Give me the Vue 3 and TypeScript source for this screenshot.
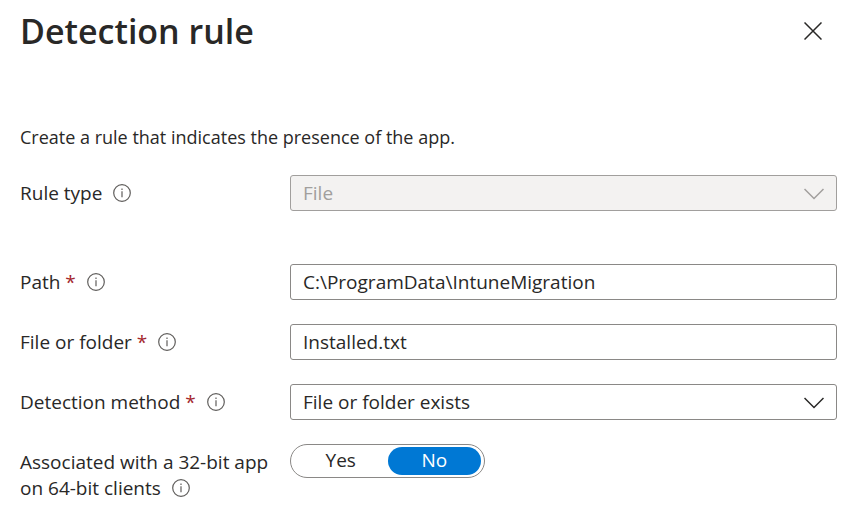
<script setup lang="ts">
import { ref } from 'vue'

interface Field {
  id: string
  label: string
  kind: 'text' | 'select'
  required: boolean
  disabled: boolean
  value: string
}

const fields = ref<Field[]>([
  { id: 'rule-type', label: 'Rule type', kind: 'select', required: false, disabled: true, value: 'File' },
  { id: 'path', label: 'Path', kind: 'text', required: true, disabled: false, value: 'C:\\ProgramData\\IntuneMigration' },
  { id: 'file-or-folder', label: 'File or folder', kind: 'text', required: true, disabled: false, value: 'Installed.txt' },
  { id: 'detection-method', label: 'Detection method', kind: 'select', required: true, disabled: false, value: 'File or folder exists' },
])

const choices = ['Yes', 'No']
const associated = ref('No')
</script>

<template>
  <main class="panel">
    <header class="header">
      <h1 class="title">Detection rule</h1>
      <button class="close" type="button">
        <svg width="18" height="18" viewBox="0 0 18 18" aria-hidden="true">
          <path d="M.5 .5 17.5 17.5M17.5 .5 .5 17.5" fill="none" stroke="currentColor" stroke-width="1.5" />
        </svg>
      </button>
    </header>

    <p class="intro">Create a rule that indicates the presence of the app.</p>

    <form class="form" @submit.prevent>
      <div v-for="field in fields" :key="field.id" class="row" :class="{ separated: field.disabled }">
        <label class="label" :for="field.id">
          <span>{{ field.label }}</span><span v-if="field.required" class="required"> *</span>
          <svg class="info" viewBox="0 0 18 18" aria-hidden="true">
            <circle cx="9" cy="9" r="8.3" fill="none" stroke="currentColor" stroke-width="1.2" />
            <path d="M9 7.3V13.2M9 4.6V6" fill="none" stroke="currentColor" stroke-width="1.2" />
          </svg>
        </label>
        <div v-if="field.kind === 'select'" class="select-wrap" :class="{ muted: field.disabled }">
          <select :id="field.id" v-model="field.value" class="control" :disabled="field.disabled">
            <option>{{ field.value }}</option>
          </select>
          <svg class="chevron" viewBox="0 0 20 12" aria-hidden="true">
            <path d="M.5 1 10 10.5 19.5 1" fill="none" stroke="currentColor" stroke-width="1.5" />
          </svg>
        </div>
        <input v-else :id="field.id" v-model="field.value" class="control" type="text" spellcheck="false" />
      </div>

      <div class="row">
        <span id="associated-label" class="label">
          <span>Associated with a 32-bit app on 64-bit clients</span>
          <svg class="info" viewBox="0 0 18 18" aria-hidden="true">
            <circle cx="9" cy="9" r="8.3" fill="none" stroke="currentColor" stroke-width="1.2" />
            <path d="M9 7.3V13.2M9 4.6V6" fill="none" stroke="currentColor" stroke-width="1.2" />
          </svg>
        </span>
        <div class="toggle" role="radiogroup" aria-labelledby="associated-label">
          <label v-for="choice in choices" :key="choice" class="choice" :class="{ selected: associated === choice }">
            <input v-model="associated" class="radio" type="radio" name="associated" :value="choice" />
            {{ choice }}
          </label>
        </div>
      </div>
    </form>
  </main>
</template>

<style>
body {
  margin: 0;
  background: #fff;
}
</style>

<style scoped>
.panel {
  box-sizing: border-box;
  padding: 7px 17px 15px 20px;
  color: #292827;
  font-family: "Segoe UI", "Open Sans", "Noto Sans", sans-serif;
  font-size: 19px;
  line-height: 26px;
}

.header {
  display: flex;
  align-items: center;
  justify-content: space-between;
}

.title {
  margin: 0;
  font-size: 34px;
  font-weight: 600;
  line-height: 48px;
}

.close {
  display: flex;
  padding: 6px;
  margin-right: 9px;
  border: 0;
  background: none;
  color: #292827;
}

.intro {
  margin: 69px 0 25px;
  font-size: 18px;
}

.form {
  display: grid;
  gap: 24px;
}

.row {
  display: grid;
  grid-template-columns: 250px minmax(0, 1fr);
  column-gap: 20px;
  align-items: start;
}

.separated {
  margin-bottom: 29px;
}

.label {
  padding-top: 5px;
}

.required {
  color: #a4262c;
}

.info {
  width: 18px;
  height: 18px;
  margin-left: 11px;
  vertical-align: -2px;
  color: #605e5c;
}

.control {
  display: block;
  box-sizing: border-box;
  width: 100%;
  height: 36px;
  margin: 0;
  padding: 0 12px;
  border: 1px solid #8a8886;
  border-radius: 3px;
  background: #fff;
  color: #292827;
  font: inherit;
  appearance: none;
}

.control:disabled {
  border-color: #a19f9d;
  background: #f3f2f1;
  color: #a19f9d;
  opacity: 1;
}

.select-wrap {
  position: relative;
}

.chevron {
  position: absolute;
  top: 13px;
  right: 13px;
  width: 20px;
  height: 12px;
  pointer-events: none;
}

.muted .chevron {
  color: #a19f9d;
}

.toggle {
  display: grid;
  grid-template-columns: 1fr 1fr;
  justify-self: start;
  box-sizing: border-box;
  width: 195px;
  height: 34px;
  padding: 2px 3px;
  border: 1px solid #8a8886;
  border-radius: 17px;
}

.choice {
  position: relative;
  border-radius: 14px;
  text-align: center;
  line-height: 26px;
}

.selected {
  background: #0078d4;
  color: #fff;
}

.radio {
  position: absolute;
  inset: 0;
  width: 100%;
  height: 100%;
  margin: 0;
  opacity: 0;
}
</style>
